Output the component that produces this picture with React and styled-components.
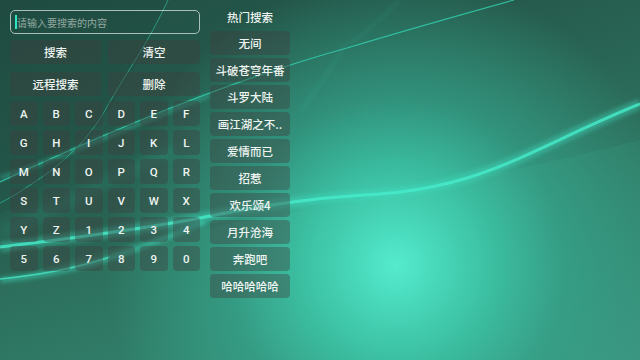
import React from "react";
import styled, { createGlobalStyle } from "styled-components";

const Global = createGlobalStyle`
  html, body { margin: 0; padding: 0; background: #23574a; }
  #root { width: 640px; height: 360px; }
`;

const Screen = styled.div`
  position: relative;
  width: 640px;
  height: 360px;
  overflow: hidden;
  font-family: Roboto, "Noto Sans CJK SC", sans-serif;
  background:
    radial-gradient(circle 290px at 396px 265px, #56ecd0 0%, #48d8bb 14%, #3abb9f 34%, rgba(52,160,136,0.75) 58%, rgba(46,130,110,0) 100%),
    linear-gradient(160deg, #214f44 0%, #25594b 30%, #2b6b59 55%, #32806c 80%, #3a8e7b 100%);
`;

const Waves = styled.svg`
  position: absolute;
  left: 0;
  top: 0;
  width: 640px;
  height: 360px;
  pointer-events: none;
`;

const Layout = styled.div`
  position: relative;
  display: flex;
  align-items: flex-start;
  gap: 10px;
  padding: 10px 0 0 10px;
`;

const LeftPanel = styled.div`
  width: 190px;
  display: flex;
  flex-direction: column;
`;

const SearchBox = styled.div`
  box-sizing: border-box;
  height: 24px;
  border: 1px solid rgba(215, 228, 222, 0.75);
  border-radius: 5px;
  display: flex;
  align-items: center;
  padding-left: 4px;
  font-family: "Noto Sans CJK SC", sans-serif;
  font-size: 10px;
  color: #93a9a1;
`;

const Caret = styled.span`
  width: 2px;
  height: 14px;
  background: #2ee6c4;
`;

const ActionGrid = styled.div`
  display: grid;
  grid-template-columns: 91px 92px;
  column-gap: 7px;
  row-gap: 8px;
  margin-top: 6px;
`;

const Btn = styled.div`
  height: ${(p) => p.$h || 24}px;
  border-radius: 4px;
  background: rgba(62, 62, 62, 0.4);
  color: #eef4f1;
  display: flex;
  align-items: center;
  justify-content: center;
  font-family: ${(p) => (p.$latin ? "Roboto" : '"Noto Sans CJK SC"')}, sans-serif;
  font-size: ${(p) => (p.$latin ? 11.5 : 11.5)}px;
  font-weight: 500;
  white-space: nowrap;
`;

const KeyGrid = styled.div`
  display: grid;
  grid-template-columns: repeat(6, 1fr);
  column-gap: 5px;
  row-gap: 4px;
  margin-top: 5px;
`;

const RightPanel = styled.div`
  width: 80px;
  display: flex;
  flex-direction: column;
  gap: 3px;
`;

const HotTitle = styled.div`
  height: 18px;
  line-height: 14px;
  text-align: center;
  font-family: "Noto Sans CJK SC", sans-serif;
  font-size: 11.5px;
  font-weight: 500;
  color: #eef4f1;
`;

const keys = "ABCDEFGHIJKLMNOPQRSTUVWXYZ1234567890".split("");
const hot = ["无间", "斗破苍穹年番", "斗罗大陆", "画江湖之不..", "爱情而已", "招惹", "欢乐颂4", "月升沧海", "奔跑吧", "哈哈哈哈哈"];

const band = "M640 104 C600 120 560 140 520 158 C470 180 430 190 380 194 C300 198 240 210 190 220 C120 232 60 240 0 247";

export default function App() {
  return (
    <Screen>
      <Global />
      <Waves viewBox="0 0 640 360">
        <defs>
          <filter id="soft" x="-20%" y="-20%" width="140%" height="140%">
            <feGaussianBlur stdDeviation="2.2" />
          </filter>
          <filter id="soft2" x="-20%" y="-20%" width="140%" height="140%">
            <feGaussianBlur stdDeviation="6" />
          </filter>
        </defs>
        <path d="M0 282 C60 262 130 240 240 222 C380 200 520 170 640 140 L640 360 L0 360 Z" fill="rgba(90,220,190,0.07)" />
        <path d="M167 0 C140 60 110 120 60 170 C40 190 20 205 0 215 L0 0 Z" fill="rgba(0,0,0,0.04)" />
        <path d="M514 0 C460 15 400 32 347 48 C260 72 150 112 0 182" stroke="#33d3b1" strokeWidth="1.2" fill="none" opacity="0.8" />
        <path d="M168 0 C150 40 125 75 108 105 C95 130 70 160 30 185 C20 192 10 198 0 203" stroke="#2fc8a6" strokeWidth="1" fill="none" opacity="0.6" />
        <path d="M400 0 C380 20 360 38 343 48 C330 70 315 92 300 112" stroke="#3bc9a8" strokeWidth="1.5" fill="none" opacity="0.25" filter="url(#soft)" />
        <path d={band} stroke="#3fe0c0" strokeWidth="10" fill="none" opacity="0.4" filter="url(#soft)" />
        <path d={band} stroke="#46ecca" strokeWidth="3" fill="none" opacity="0.8" />
        <path d="M0 280 C40 276 80 268 110 258 C150 245 180 232 205 222" stroke="#3ee0bf" strokeWidth="5" fill="none" opacity="0.55" filter="url(#soft)" />
        <path d="M0 279 C40 275 80 267 110 257" stroke="#4af0cd" strokeWidth="1.5" fill="none" opacity="0.7" />
        <path d="M0 178 C25 170 50 160 70 152 C110 135 160 115 210 95" stroke="#38d6b5" strokeWidth="3" fill="none" opacity="0.5" filter="url(#soft)" />
        <path d="M0 232 C30 222 70 200 100 185 C130 170 150 160 175 150" stroke="#36d0b0" strokeWidth="5" fill="none" opacity="0.3" filter="url(#soft2)" />
      </Waves>
      <Layout>
        <LeftPanel>
          <SearchBox>
            <Caret />
            <span>请输入要搜索的内容</span>
          </SearchBox>
          <ActionGrid>
            <Btn>搜索</Btn>
            <Btn>清空</Btn>
            <Btn>远程搜索</Btn>
            <Btn>删除</Btn>
          </ActionGrid>
          <KeyGrid>
            {keys.map((k) => (
              <Btn key={k} $h={25} $latin>
                {k}
              </Btn>
            ))}
          </KeyGrid>
        </LeftPanel>
        <RightPanel>
          <HotTitle>热门搜索</HotTitle>
          {hot.map((h) => (
            <Btn key={h}>{h}</Btn>
          ))}
        </RightPanel>
      </Layout>
    </Screen>
  );
}
